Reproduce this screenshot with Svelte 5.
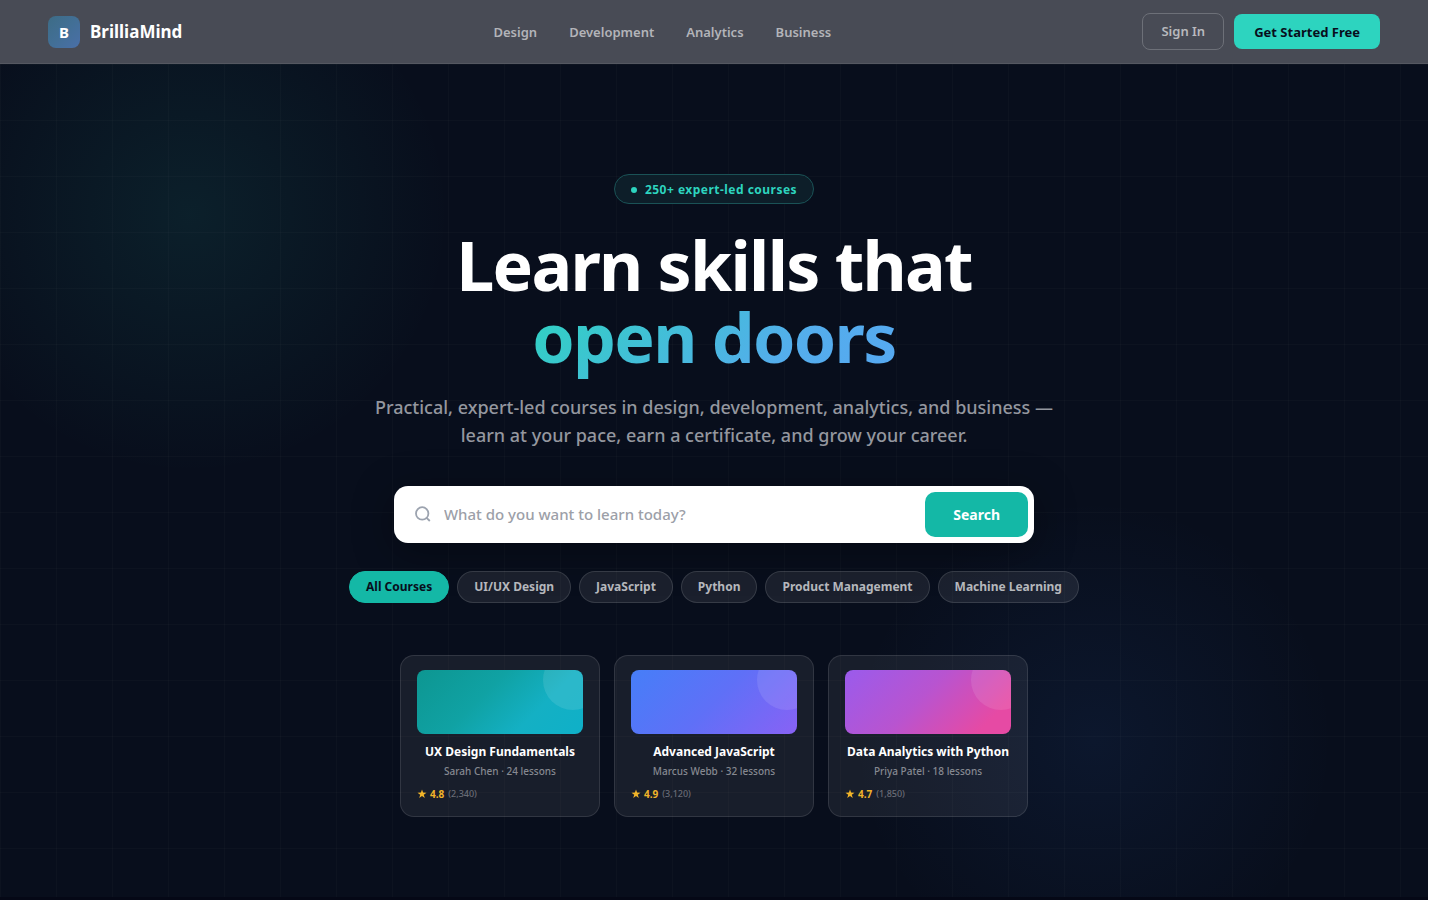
<script lang="ts">
	interface Course {
		title: string;
		teacher: string;
		lessons: number;
		rating: string;
		reviews: string;
		theme: 'teal' | 'blue' | 'pink';
	}

	const links = ['Design', 'Development', 'Analytics', 'Business'];
	const topics = [
		'All Courses',
		'UI/UX Design',
		'JavaScript',
		'Python',
		'Product Management',
		'Machine Learning'
	];
	const courses: Course[] = [
		{
			title: 'UX Design Fundamentals',
			teacher: 'Sarah Chen',
			lessons: 24,
			rating: '4.8',
			reviews: '2,340',
			theme: 'teal'
		},
		{
			title: 'Advanced JavaScript',
			teacher: 'Marcus Webb',
			lessons: 32,
			rating: '4.9',
			reviews: '3,120',
			theme: 'blue'
		},
		{
			title: 'Data Analytics with Python',
			teacher: 'Priya Patel',
			lessons: 18,
			rating: '4.7',
			reviews: '1,850',
			theme: 'pink'
		}
	];

	let query = $state('');
	let activeTopic = $state('All Courses');
</script>

<div class="page">
	<header class="nav">
		<a class="brand" href="#home">
			<span class="brand__mark">B</span>
			<span>BrilliaMind</span>
		</a>
		<nav class="nav__links" aria-label="Main">
			{#each links as link}
				<a href={`#${link.toLowerCase()}`}>{link}</a>
			{/each}
		</nav>
		<div class="nav__actions">
			<button class="btn btn--ghost" type="button">Sign In</button>
			<button class="btn btn--primary" type="button">Get Started Free</button>
		</div>
	</header>

	<main class="hero">
		<p class="badge"><span class="badge__dot"></span>250+ expert-led courses</p>

		<h1>Learn skills that<br /><span class="accent">open doors</span></h1>

		<p class="lead">
			Practical, expert-led courses in design, development, analytics, and business — learn at your
			pace, earn a certificate, and grow your career.
		</p>

		<form class="search" role="search" onsubmit={(e) => e.preventDefault()}>
			<svg width="18" height="18" viewBox="0 0 18 18" fill="none" aria-hidden="true">
				<circle cx="8.2" cy="7.4" r="6.2" stroke="currentColor" stroke-width="1.8" />
				<path d="M12.4 11.6L15.8 15" stroke="currentColor" stroke-width="1.8" />
			</svg>
			<input
				type="text"
				aria-label="Search courses"
				placeholder="What do you want to learn today?"
				bind:value={query}
			/>
			<button type="submit">Search</button>
		</form>

		<div class="topics">
			{#each topics as topic}
				<button
					type="button"
					class="topic"
					class:topic--active={topic === activeTopic}
					aria-pressed={topic === activeTopic}
					onclick={() => (activeTopic = topic)}
				>
					{topic}
				</button>
			{/each}
		</div>

		<div class="courses">
			{#each courses as course}
				<article class="card">
					<div class={`card__cover card__cover--${course.theme}`}></div>
					<h2>{course.title}</h2>
					<p class="card__meta">{course.teacher} · {course.lessons} lessons</p>
					<p class="card__rating">
						<svg width="10" height="10" viewBox="0 0 10 10" aria-hidden="true">
							<path
								d="M5 .5l1.1 3.1 3.4.1-2.7 2 1 3.3L5 7.1 2.2 9l1-3.3-2.7-2 3.4-.1z"
								fill="currentColor"
							/>
						</svg>
						<strong>{course.rating}</strong>
						<span>({course.reviews})</span>
					</p>
				</article>
			{/each}
		</div>
	</main>
</div>

<style>
	:global(body) {
		background: #fff;
	}

	.page {
		box-sizing: border-box;
		min-height: 100vh;
		margin-right: 12px;
		background: #050816;
		color: #fff;
		font-family: 'Noto Sans', sans-serif;
	}

	h1,
	h2,
	p {
		margin: 0;
	}

	a {
		color: inherit;
		text-decoration: none;
	}

	button,
	input {
		font-family: inherit;
	}

	button {
		cursor: pointer;
	}

	.nav {
		box-sizing: border-box;
		display: flex;
		align-items: center;
		justify-content: space-between;
		height: 64px;
		padding: 0 48px;
		background: #484b55;
		border-bottom: 1px solid #555861;
	}

	.brand {
		display: flex;
		align-items: center;
		gap: 10px;
		font-size: 17px;
		font-weight: 700;
	}

	.brand__mark {
		display: grid;
		place-items: center;
		width: 32px;
		height: 32px;
		border-radius: 8px;
		background: linear-gradient(135deg, #3d6c86, #426f96 50%, #4a6fa8);
		font-size: 15px;
	}

	.nav__links {
		display: flex;
		gap: 32px;
		color: #b3b4b9;
		font-size: 13px;
		font-weight: 600;
	}

	.nav__actions {
		display: flex;
		align-items: center;
		gap: 10px;
	}

	.btn {
		padding: 10px 20px 8px;
		border: 0;
		border-radius: 8px;
		font-size: 13px;
		line-height: 17px;
	}

	.btn--ghost {
		padding: 9px 18px;
		border: 1px solid #6d7078;
		background: transparent;
		color: #b8b9bd;
		font-weight: 600;
	}

	.btn--primary {
		background: #2dd4bf;
		color: #080e1c;
		font-weight: 700;
	}

	.hero {
		display: flex;
		flex-direction: column;
		align-items: center;
		padding: 110px 24px 80px;
		background:
			linear-gradient(rgba(255, 255, 255, 0.02) 1px, transparent 1px) 0 0 / 56px 56px,
			linear-gradient(90deg, rgba(255, 255, 255, 0.02) 1px, transparent 1px) 0 0 / 56px 56px,
			radial-gradient(circle 260px at 190px 150px, rgba(45, 212, 191, 0.09), transparent),
			radial-gradient(
				circle 240px at calc(100% - 334px) calc(100% - 157px),
				rgba(59, 130, 246, 0.08),
				transparent
			),
			#080e1c;
		text-align: center;
	}

	.badge {
		display: flex;
		align-items: center;
		gap: 8px;
		padding: 7px 16px 5px;
		border: 1px solid #1a5256;
		border-radius: 16px;
		background: #0d1e29;
		color: #2dd4bf;
		font-size: 12px;
		font-weight: 700;
		line-height: 16px;
		letter-spacing: 0.04em;
	}

	.badge__dot {
		width: 6px;
		height: 6px;
		border-radius: 50%;
		background: #2dd4bf;
	}

	h1 {
		margin-top: 25px;
		font-size: 68px;
		font-weight: 700;
		line-height: 72px;
		letter-spacing: -0.025em;
	}

	.accent {
		background: linear-gradient(135deg, #2dd4bf, #54adec 70%, #56a8f2);
		background-clip: text;
		-webkit-background-clip: text;
		color: transparent;
	}

	.lead {
		max-width: 700px;
		margin-top: 20px;
		color: #94979f;
		font-size: 18px;
		font-weight: 500;
		line-height: 28px;
	}

	.search {
		box-sizing: border-box;
		display: flex;
		align-items: center;
		width: 100%;
		max-width: 640px;
		margin-top: 37px;
		padding: 6px 6px 6px 20px;
		border-radius: 14px;
		background: #fff;
		box-shadow: 0 8px 40px rgba(0, 0, 0, 0.35);
		color: #9ca3af;
	}

	.search input {
		flex: 1;
		min-width: 0;
		padding: 0 12px 2px;
		border: 0;
		outline: 0;
		background: transparent;
		color: #111827;
		font-size: 15px;
		font-weight: 500;
	}

	.search input::placeholder {
		color: #9ca0a8;
		opacity: 1;
	}

	.search button {
		padding: 13px 28px;
		border: 0;
		border-radius: 10px;
		background: #14b8a6;
		color: #fff;
		font-size: 14px;
		font-weight: 700;
		line-height: 19px;
	}

	.topics {
		display: flex;
		flex-wrap: wrap;
		justify-content: center;
		gap: 8px;
		margin-top: 28px;
	}

	.topic {
		padding: 7px 16px;
		border: 1px solid rgba(255, 255, 255, 0.12);
		border-radius: 16px;
		background: rgba(255, 255, 255, 0.08);
		color: #b5b7bc;
		font-size: 12px;
		font-weight: 700;
		line-height: 16px;
	}

	.topic--active {
		border-color: #14b8a6;
		background: #14b8a6;
		color: #080e1c;
	}

	.courses {
		display: flex;
		flex-wrap: wrap;
		justify-content: center;
		gap: 14px;
		margin-top: 52px;
	}

	.card {
		box-sizing: border-box;
		width: 200px;
		padding: 14px 16px;
		border: 1px solid rgba(255, 255, 255, 0.11);
		border-radius: 14px;
		background: rgba(255, 255, 255, 0.065);
	}

	.card__cover {
		position: relative;
		height: 64px;
		overflow: hidden;
		border-radius: 8px;
	}

	.card__cover::after {
		content: '';
		position: absolute;
		top: -20px;
		right: -20px;
		width: 60px;
		height: 60px;
		border-radius: 50%;
		background: rgba(255, 255, 255, 0.1);
	}

	.card__cover--teal {
		background: linear-gradient(135deg, #0d9691, #10a2a4 40%, #14b0c4 70%, #0fb0c8);
	}

	.card__cover--blue {
		background: linear-gradient(135deg, #467ef8, #5f70f7 50%, #8862f5);
	}

	.card__cover--pink {
		background: linear-gradient(135deg, #9a5bec, #b854d0 45%, #e64aa4 85%);
	}

	.card h2 {
		margin-top: 10px;
		font-size: 12px;
		font-weight: 700;
		line-height: 16px;
		white-space: nowrap;
	}

	.card__meta {
		margin-top: 4px;
		color: #868991;
		font-size: 10px;
		font-weight: 500;
		line-height: 14px;
	}

	.card__rating {
		display: flex;
		align-items: center;
		gap: 3px;
		margin-top: 8px;
		color: #f0b429;
		font-size: 10px;
		line-height: 16px;
	}

	.card__rating span {
		margin-left: 1px;
		color: #696c76;
		font-size: 9px;
		font-weight: 500;
	}
</style>
